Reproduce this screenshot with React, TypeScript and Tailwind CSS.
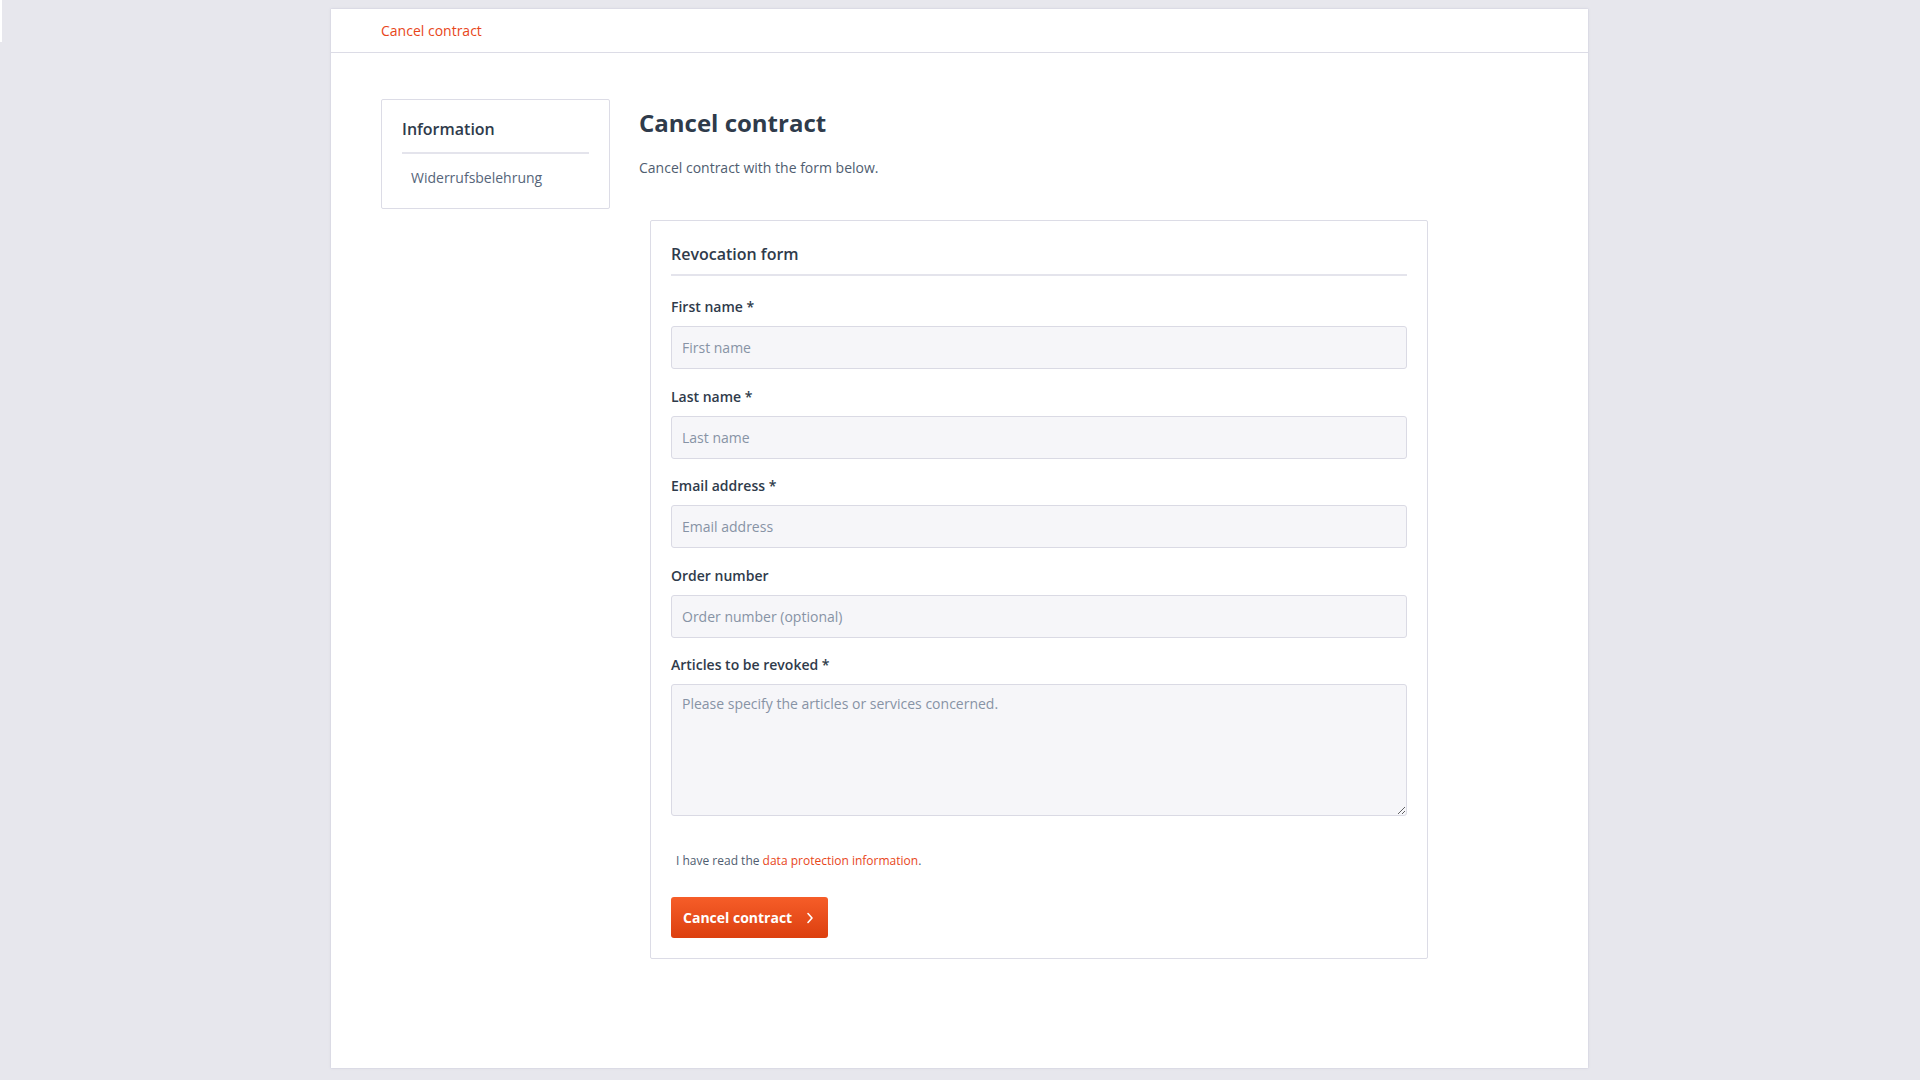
import React from 'react';

const fields = [
    { label: 'First name *', placeholder: 'First name' },
    { label: 'Last name *', placeholder: 'Last name' },
    { label: 'Email address *', placeholder: 'Email address' },
    { label: 'Order number', placeholder: 'Order number (optional)' },
];

const App: React.FC = () => {
    return (
        <div className="min-h-screen bg-[#e7e7ed] pt-[9px] pb-[12px] font-['Open_Sans',sans-serif] text-[#2f3b4b] relative">
            <div className="absolute left-0 top-0 w-[2px] h-[42px] bg-white" />
            <div className="ml-[331px] w-[1257px] h-[1059px] bg-white shadow-[0_0_2px_rgba(170,170,200,0.6)]">
                <div className="h-[44px] border-b border-[#dcdce6] px-[50px] flex items-center">
                    <a className="text-[14px] text-[#e8461a]">Cancel contract</a>
                </div>

                <div className="flex px-[50px] pt-[46px]">
                    <aside className="w-[229px] shrink-0 self-start border border-[#dcdce6] rounded-[2px] px-[20px] pt-[18px] pb-[20px]">
                        <h4 className="text-[16px] font-semibold text-[#2f3b4b] leading-[22px] pb-[12px] border-b-2 border-[#e4e4ec]">Information</h4>
                        <p className="text-[14px] text-[#56657a] pl-[9px] pt-[14px] leading-[20px]">Widerrufsbelehrung</p>
                    </aside>

                    <main className="ml-[29px] w-[789px]">
                        <h1 className="text-[24px] font-bold leading-[32px] text-[#2f3b4b] mt-[8px]">Cancel contract</h1>
                        <p className="text-[14px] text-[#4f5d70] mt-[19px] leading-[20px]">Cancel contract with the form below.</p>

                        <div className="ml-[11px] mt-[42px] border border-[#dcdce6] rounded-[2px] px-[20px] pt-[22px] pb-[20px]">
                            <h3 className="text-[16px] font-semibold leading-[22px] pb-[9px] border-b-2 border-[#e4e4ec]">Revocation form</h3>

                            <div className="pt-[21px]">
                                {fields.map(f => (
                                    <div key={f.label} className="mb-[17.5px]">
                                        <label className="block text-[14px] font-semibold leading-[20px] mb-[9px]">{f.label}</label>
                                        <input
                                            placeholder={f.placeholder}
                                            className="w-full h-[43px] bg-[#f6f6f9] border border-[#dadae4] rounded-[3px] px-[10px] text-[14px] placeholder:text-[#8793a5] outline-none"
                                        />
                                    </div>
                                ))}
                                <div>
                                    <label className="block text-[14px] font-semibold leading-[20px] mb-[9px]">Articles to be revoked *</label>
                                    <textarea
                                        placeholder="Please specify the articles or services concerned."
                                        className="w-full h-[132px] block bg-[#f6f6f9] border border-[#dadae4] rounded-[3px] px-[10px] py-[9px] text-[14px] leading-[20px] placeholder:text-[#8793a5] outline-none"
                                    />
                                </div>
                            </div>

                            <p className="text-[12px] text-[#4f5d70] mt-[36px] ml-[5px] leading-[18px]">
                                I have read the <a className="text-[#e8461a]">data protection information</a>.
                            </p>

                            <button className="mt-[27px] h-[41px] w-[157px] flex items-center justify-between px-[12px] rounded-[3px] bg-gradient-to-b from-[#f65d28] to-[#dc3f0e] text-white text-[14px] font-bold">
                                <span>Cancel contract</span>
                                <svg width="8" height="12" viewBox="0 0 8 12" fill="none" className="mr-[2px]">
                                    <path d="M2 1.5 L6 6 L2 10.5" stroke="white" strokeWidth="1.6" strokeLinecap="round" strokeLinejoin="round" />
                                </svg>
                            </button>
                        </div>
                    </main>
                </div>
            </div>
        </div>
    );
};

export default App;
